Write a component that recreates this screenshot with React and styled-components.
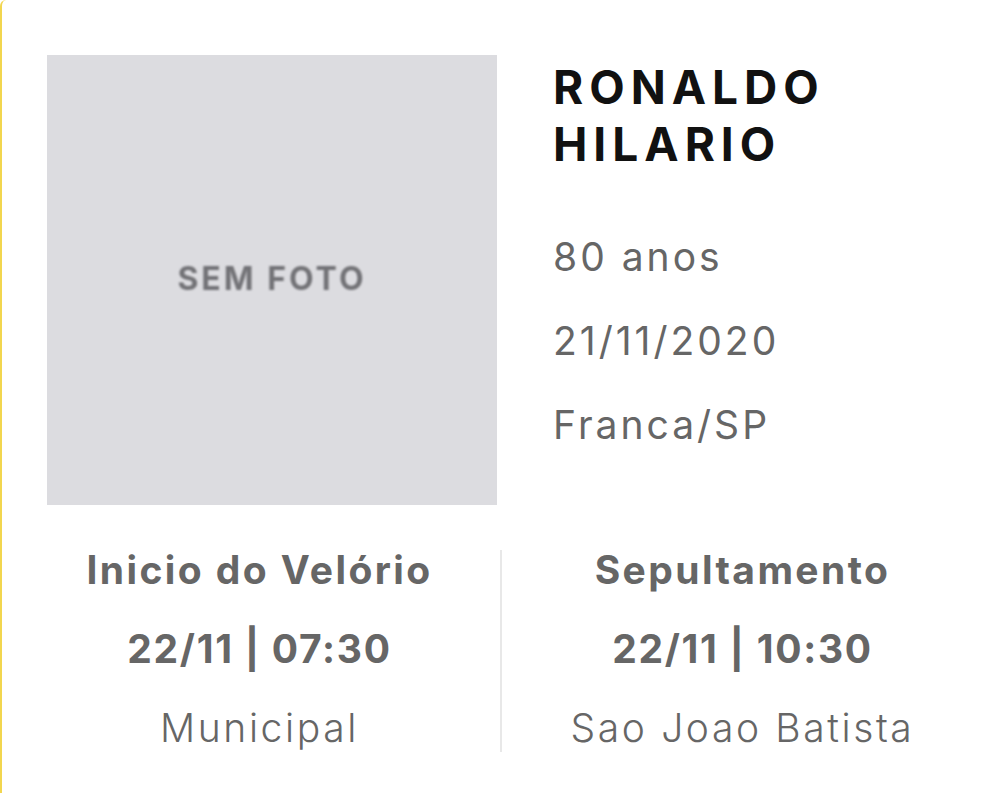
import React from "react";
import styled, { createGlobalStyle } from "styled-components";

const GlobalStyle = createGlobalStyle`
  html, body {
    margin: 0;
    padding: 0;
    background: #ffffff;
  }
  body {
    font-family: Inter, "Noto Sans", sans-serif;
  }
`;

const Card = styled.div`
  box-sizing: border-box;
  min-height: 100vh;
  border-left: 2px solid #f2d64f;
  border-top-left-radius: 6px;
  padding: 55px 38px 40px 45px;
  background: #ffffff;
`;

const TopRow = styled.div`
  display: flex;
  flex-direction: row;
  gap: 56px;
`;

const Photo = styled.div`
  width: 450px;
  height: 450px;
  flex-shrink: 0;
  background: #dcdce0;
  display: flex;
  align-items: center;
  justify-content: center;
`;

const PhotoLabel = styled.span`
  color: #727276;
  font-size: 32px;
  font-weight: 700;
  letter-spacing: 3px;
  filter: blur(0.8px);
  margin-bottom: 4px;
`;

const Info = styled.div`
  display: flex;
  flex-direction: column;
  padding-top: 4px;
`;

const Name = styled.h1`
  margin: 0 0 42px;
  color: #111111;
  font-size: 46px;
  line-height: 57px;
  font-weight: 700;
  letter-spacing: 6px;
  text-transform: uppercase;
`;

const Detail = styled.div`
  color: #666666;
  font-size: 39px;
  line-height: 84px;
  font-weight: 400;
  letter-spacing: 3px;
`;

const Events = styled.div`
  display: grid;
  grid-template-columns: 1fr 2px 1fr;
  column-gap: 22px;
  margin: 45px 0 0 -6px;
`;

const Divider = styled.div`
  background: #e8e8e8;
  height: 202px;
`;

const Event = styled.div`
  display: flex;
  flex-direction: column;
  align-items: center;
  gap: 40px;
  color: #666666;
  text-align: center;
  font-size: 39px;
  line-height: 39px;
`;

const EventLine = styled.div`
  font-weight: ${(props) => props.weight || 400};
  letter-spacing: ${(props) => props.spacing || 0}px;
  white-space: nowrap;
`;

const events = [
  { title: "Inicio do Velório", date: "22/11 | 07:30", place: "Municipal" },
  { title: "Sepultamento", date: "22/11 | 10:30", place: "Sao Joao Batista" },
];

const EventBlock = ({ event }) => (
  <Event>
    <EventLine weight={700} spacing={2.4}>
      {event.title}
    </EventLine>
    <EventLine weight={700} spacing={1.7}>
      {event.date}
    </EventLine>
    <EventLine weight={300} spacing={2.6}>
      {event.place}
    </EventLine>
  </Event>
);

const App = () => (
  <>
    <GlobalStyle />
    <Card>
      <TopRow>
        <Photo>
          <PhotoLabel>SEM FOTO</PhotoLabel>
        </Photo>
        <Info>
          <Name>
            Ronaldo
            <br />
            Hilario
          </Name>
          <Detail>80 anos</Detail>
          <Detail>21/11/2020</Detail>
          <Detail>Franca/SP</Detail>
        </Info>
      </TopRow>
      <Events>
        <EventBlock event={events[0]} />
        <Divider />
        <EventBlock event={events[1]} />
      </Events>
    </Card>
  </>
);

export default App;
